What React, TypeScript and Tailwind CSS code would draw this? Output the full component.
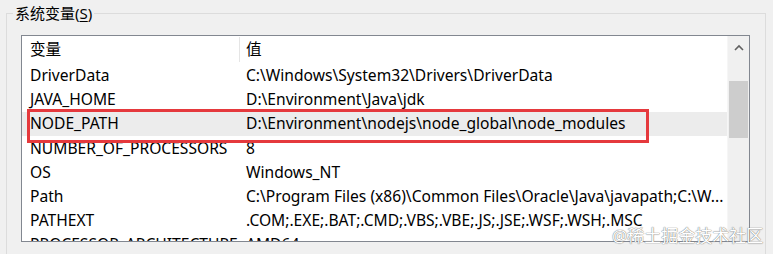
import React from "react";

const rows: [string, string][] = [
  ["DriverData", "C:\\Windows\\System32\\Drivers\\DriverData"],
  ["JAVA_HOME", "D:\\Environment\\Java\\jdk"],
  ["NODE_PATH", "D:\\Environment\\nodejs\\node_global\\node_modules"],
  ["NUMBER_OF_PROCESSORS", "8"],
  ["OS", "Windows_NT"],
  ["Path", "C:\\Program Files (x86)\\Common Files\\Oracle\\Java\\javapath;C:\\W..."],
  ["PATHEXT", ".COM;.EXE;.BAT;.CMD;.VBS;.VBE;.JS;.JSE;.WSF;.WSH;.MSC"],
  ["PROCESSOR_ARCHITECTURE", "AMD64"],
];

export default function App() {
  return (
    <div
      className="relative w-[773px] h-[254px] overflow-hidden bg-[#f0f0f0] text-black"
      style={{ fontFamily: '"Noto Sans", "Noto Sans CJK SC", sans-serif' }}
    >
      <div className="pt-[13px] pl-[6px] w-[766px]">
        <div className="relative h-[241px] border-l border-t border-r border-[#dcdcdc] pl-[14px] pt-[21px] pr-[15px]">
          <span className="absolute left-[6px] -top-[11px] px-[2px] bg-[#f0f0f0] text-[15px] leading-5">
            系统变量(<span className="underline underline-offset-2">S</span>)
          </span>

          <div className="flex h-[207px] w-[729px] border border-[#828790] bg-white overflow-hidden">
            <div className="flex flex-col w-[705px] text-[15.6px]">
              <div className="flex h-[27.6px] shrink-0 items-center">
                <div className="w-[217px] pl-[8px] h-full flex items-center">变量</div>
                <div className="w-px h-[25px] bg-[#e5e5e5]" />
                <div className="pl-[6px] flex items-center">值</div>
              </div>
              {rows.map(([k, v], i) => (
                <div
                  key={k}
                  className={`flex h-[24.2px] shrink-0 items-center whitespace-nowrap ${i === 2 ? "bg-[#ececec]" : ""}`}
                >
                  <div className="w-[218px] shrink-0 pl-[8px] overflow-hidden">{k}</div>
                  <div className="pl-[6px]">{v}</div>
                </div>
              ))}
            </div>
            <div className="flex flex-col w-[22px] bg-[#f0f0f0] border-l border-[#f6f6f6]">
              <div className="h-[45px] flex items-start justify-center pt-[8px]">
                <svg width="10" height="7" viewBox="0 0 10 7">
                  <path d="M1 6 L5 2 L9 6" fill="none" stroke="#606060" strokeWidth="1.6" />
                </svg>
              </div>
              <div className="mx-[1px] h-[57px] bg-[#cdcdcd]" />
            </div>
          </div>
        </div>
      </div>

      <div className="absolute left-[27px] top-[109px] w-[622px] h-[34px] border-[3px] border-[#e5393d]" />

      <div className="absolute left-[612px] top-[224px] text-[17px] leading-6 text-white [text-shadow:0_0_1px_#777,0_0_1px_#777]">
        @稀土掘金技术社区
      </div>
    </div>
  );
}
